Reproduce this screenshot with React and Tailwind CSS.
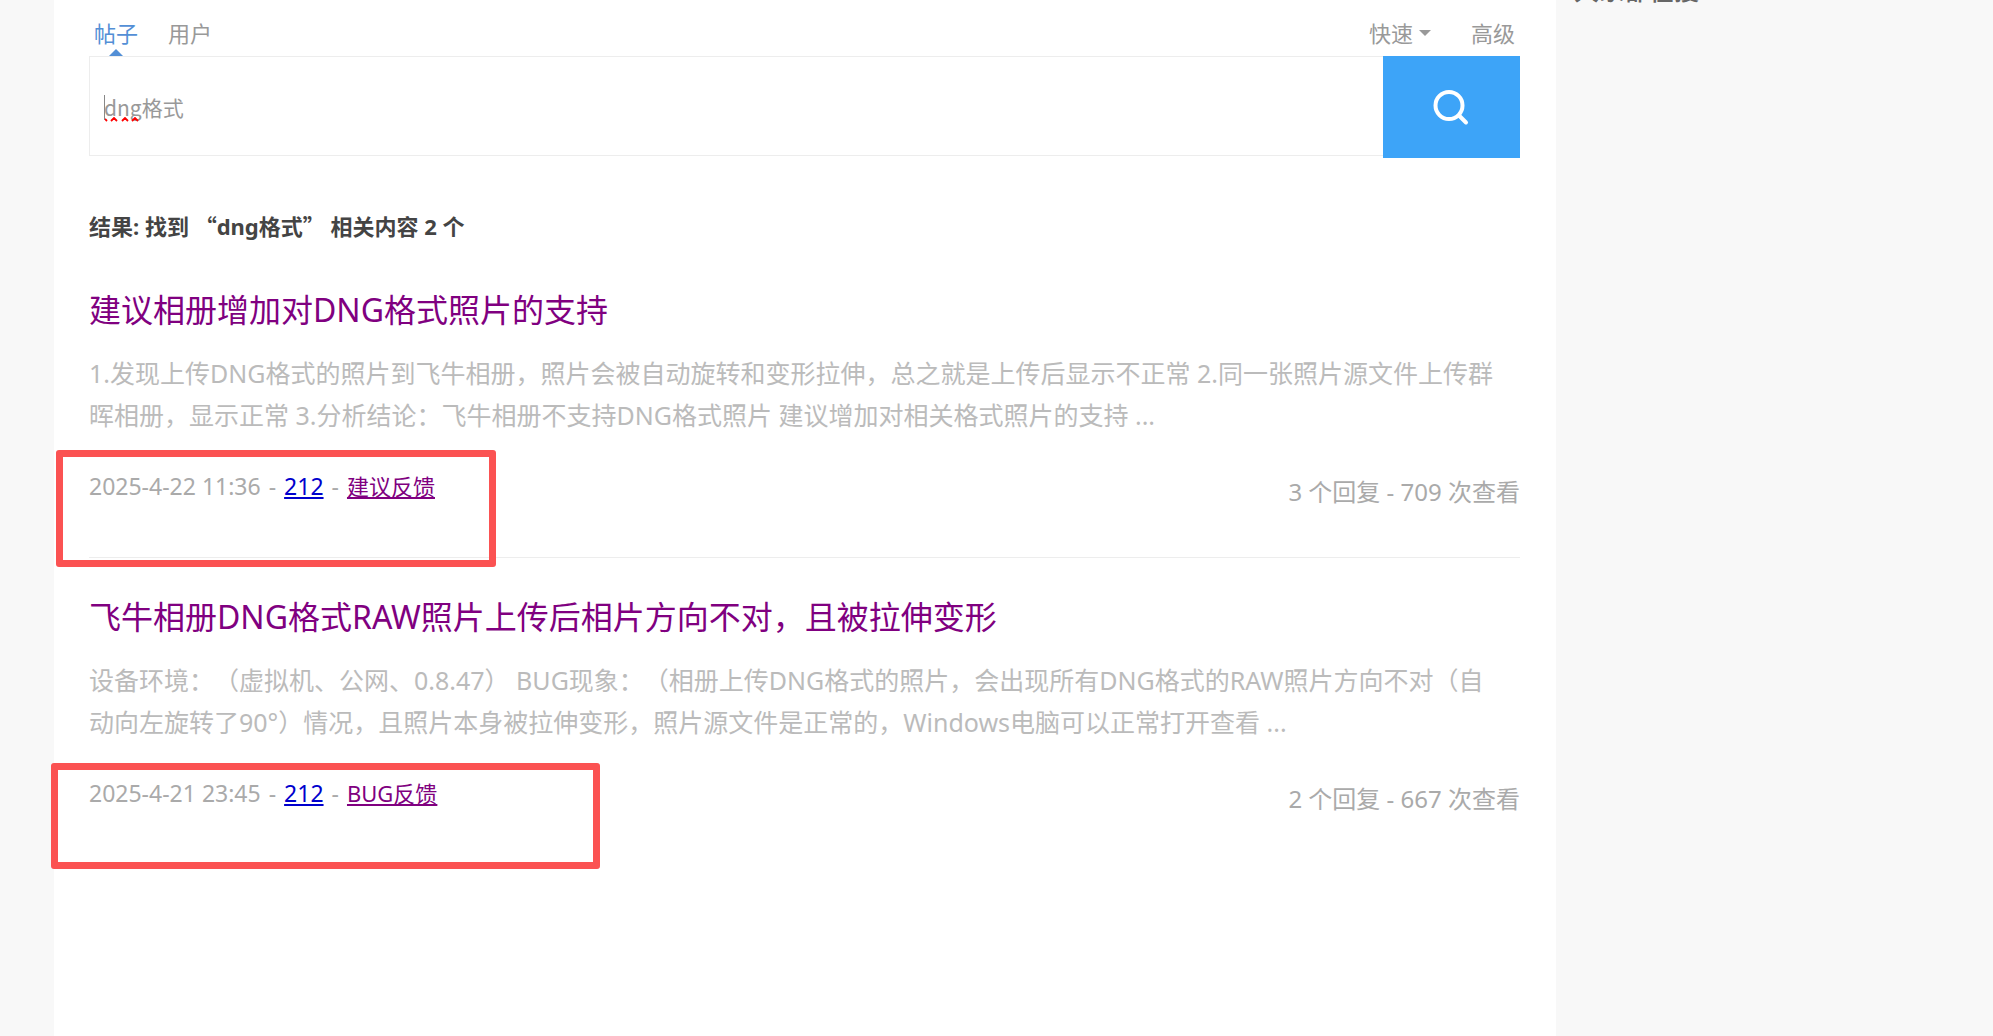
const results = [
  {
    id: 1,
    title: '建议相册增加对DNG格式照片的支持',
    excerpt:
      '1.发现上传DNG格式的照片到飞牛相册，照片会被自动旋转和变形拉伸，总之就是上传后显示不正常 2.同一张照片源文件上传群晖相册，显示正常 3.分析结论：飞牛相册不支持DNG格式照片 建议增加对相关格式照片的支持 ...',
    date: '2025-4-22 11:36',
    author: '212',
    forum: '建议反馈',
    replies: 3,
    views: 709,
    mark: '-left-[33px] -top-[22px] h-[117px] w-[440px]',
  },
  {
    id: 2,
    title: '飞牛相册DNG格式RAW照片上传后相片方向不对，且被拉伸变形',
    excerpt:
      '设备环境：（虚拟机、公网、0.8.47） BUG现象：（相册上传DNG格式的照片，会出现所有DNG格式的RAW照片方向不对（自动向左旋转了90°）情况，且照片本身被拉伸变形，照片源文件是正常的，Windows电脑可以正常打开查看 ...',
    date: '2025-4-21 23:45',
    author: '212',
    forum: 'BUG反馈',
    replies: 2,
    views: 667,
    mark: '-left-[38px] -top-[16px] h-[106px] w-[549px]',
  },
]

export default function App() {
  return (
    <div className="flex min-h-screen bg-[#f8f8f8] pl-[54px] font-['Noto_Sans','Noto_Sans_CJK_SC',sans-serif] [text-spacing-trim:space-all]">
      <main className="min-w-0 flex-1 bg-white pt-[18px] pr-9 pl-[35px]">
        <SearchBar />
        <h2 className="mt-[52px] text-[22px] leading-[30px] font-bold text-[#444]">
          结果: 找到 <Quote>“</Quote>dng格式<Quote>”</Quote> 相关内容 2 个
        </h2>
        <ul className="mt-2.5">
          {results.map((item) => (
            <ResultItem key={item.id} {...item} />
          ))}
        </ul>
      </main>
      <Sidebar />
    </div>
  )
}

// full-width quotation marks, as Chinese text sets them
function Quote({ children }) {
  return <span className="font-['Noto_Sans_CJK_SC',sans-serif]">{children}</span>
}

function SearchBar() {
  return (
    <form onSubmit={(e) => e.preventDefault()}>
      <div className="flex h-[38px] justify-between px-[5px] text-[22px] leading-[30px] text-[#999]">
        <div className="flex gap-[30px]">
          <a href="#posts" className="relative text-[#538fd6]">
            帖子
            <svg className="absolute top-[31px] left-[15px]" width="14" height="7" viewBox="0 0 14 7" fill="#538fd6" aria-hidden="true">
              <path d="M7 0l7 7H0z" />
            </svg>
          </a>
          <a href="#users">用户</a>
        </div>
        <div className="flex gap-10">
          <a href="#quick" className="flex gap-1.5">
            快速
            <svg className="mt-3" width="12" height="6" viewBox="0 0 12 6" fill="#999" aria-hidden="true">
              <path d="M0 0h12L6 6z" />
            </svg>
          </a>
          <a href="#advanced">高级</a>
        </div>
      </div>
      <div className="flex items-start">
        <div className="relative min-w-0 flex-1">
          <input
            type="text"
            aria-label="搜索"
            defaultValue="dng格式"
            spellCheck={false}
            className="block h-[100px] w-full border border-r-0 border-[#ededed] bg-white px-[14px] pt-0.5 font-['Noto_Sans_CJK_SC',sans-serif] text-[21px] text-[#999] outline-none"
          />
          <span className="absolute top-[39px] left-[15px] h-[25px] w-px bg-[#888]" />
          <svg className="absolute top-[61px] left-4" width="35" height="5" fill="none" stroke="#f00" strokeWidth="1.8" aria-hidden="true">
            <path d="M0 2l2 2M6 4l3-3 3 3M17 4l3-3 3 3M27 4l3-3 3 3" />
          </svg>
        </div>
        <button type="submit" aria-label="搜索" className="flex h-[102px] w-[137px] items-center justify-center bg-[#3da4f8]">
          <SearchIcon />
        </button>
      </div>
    </form>
  )
}

function ResultItem({ title, excerpt, date, author, forum, replies, views, mark }) {
  return (
    <li className="border-b border-[#ededed] pt-[37px] pb-[51px] last:border-b-0">
      <h3 className="text-[32px] leading-[44px] text-[#800080]">
        <a href="#thread">{title}</a>
      </h3>
      <p className="mt-5 pr-5 text-[25px] leading-[42px] text-[#bbb]">{excerpt}</p>
      <div className="relative mt-9 flex items-start justify-between text-[#aaa]">
        <div className="flex items-baseline gap-2 text-[23px] leading-[28px]">
          <time>{date}</time>
          <span>-</span>
          <a href="#author" className="text-[#0000cd] underline">{author}</a>
          <span>-</span>
          <a href="#forum" className="text-[22px] text-[#800080] underline">{forum}</a>
        </div>
        <p className="mt-1.5 text-[24px] leading-[28px]">
          {replies} 个回复 - {views} 次查看
        </p>
        <span className={`pointer-events-none absolute rounded-[3px] border-[7px] border-[#fb5252] ${mark}`} />
      </div>
    </li>
  )
}

function Sidebar() {
  return (
    <aside className="w-[437px] overflow-hidden pl-[18px]">
      <h4 className="-mt-[26px] text-[25px] leading-8 font-medium text-[#666]">大家都在搜:</h4>
    </aside>
  )
}

function SearchIcon() {
  return (
    <svg width="38" height="38" viewBox="0 0 38 38" fill="none" stroke="#fff" strokeWidth="4" strokeLinecap="round" aria-hidden="true">
      <circle cx="16" cy="17.5" r="13.5" />
      <path d="M26 27.5l7 7" />
    </svg>
  )
}
